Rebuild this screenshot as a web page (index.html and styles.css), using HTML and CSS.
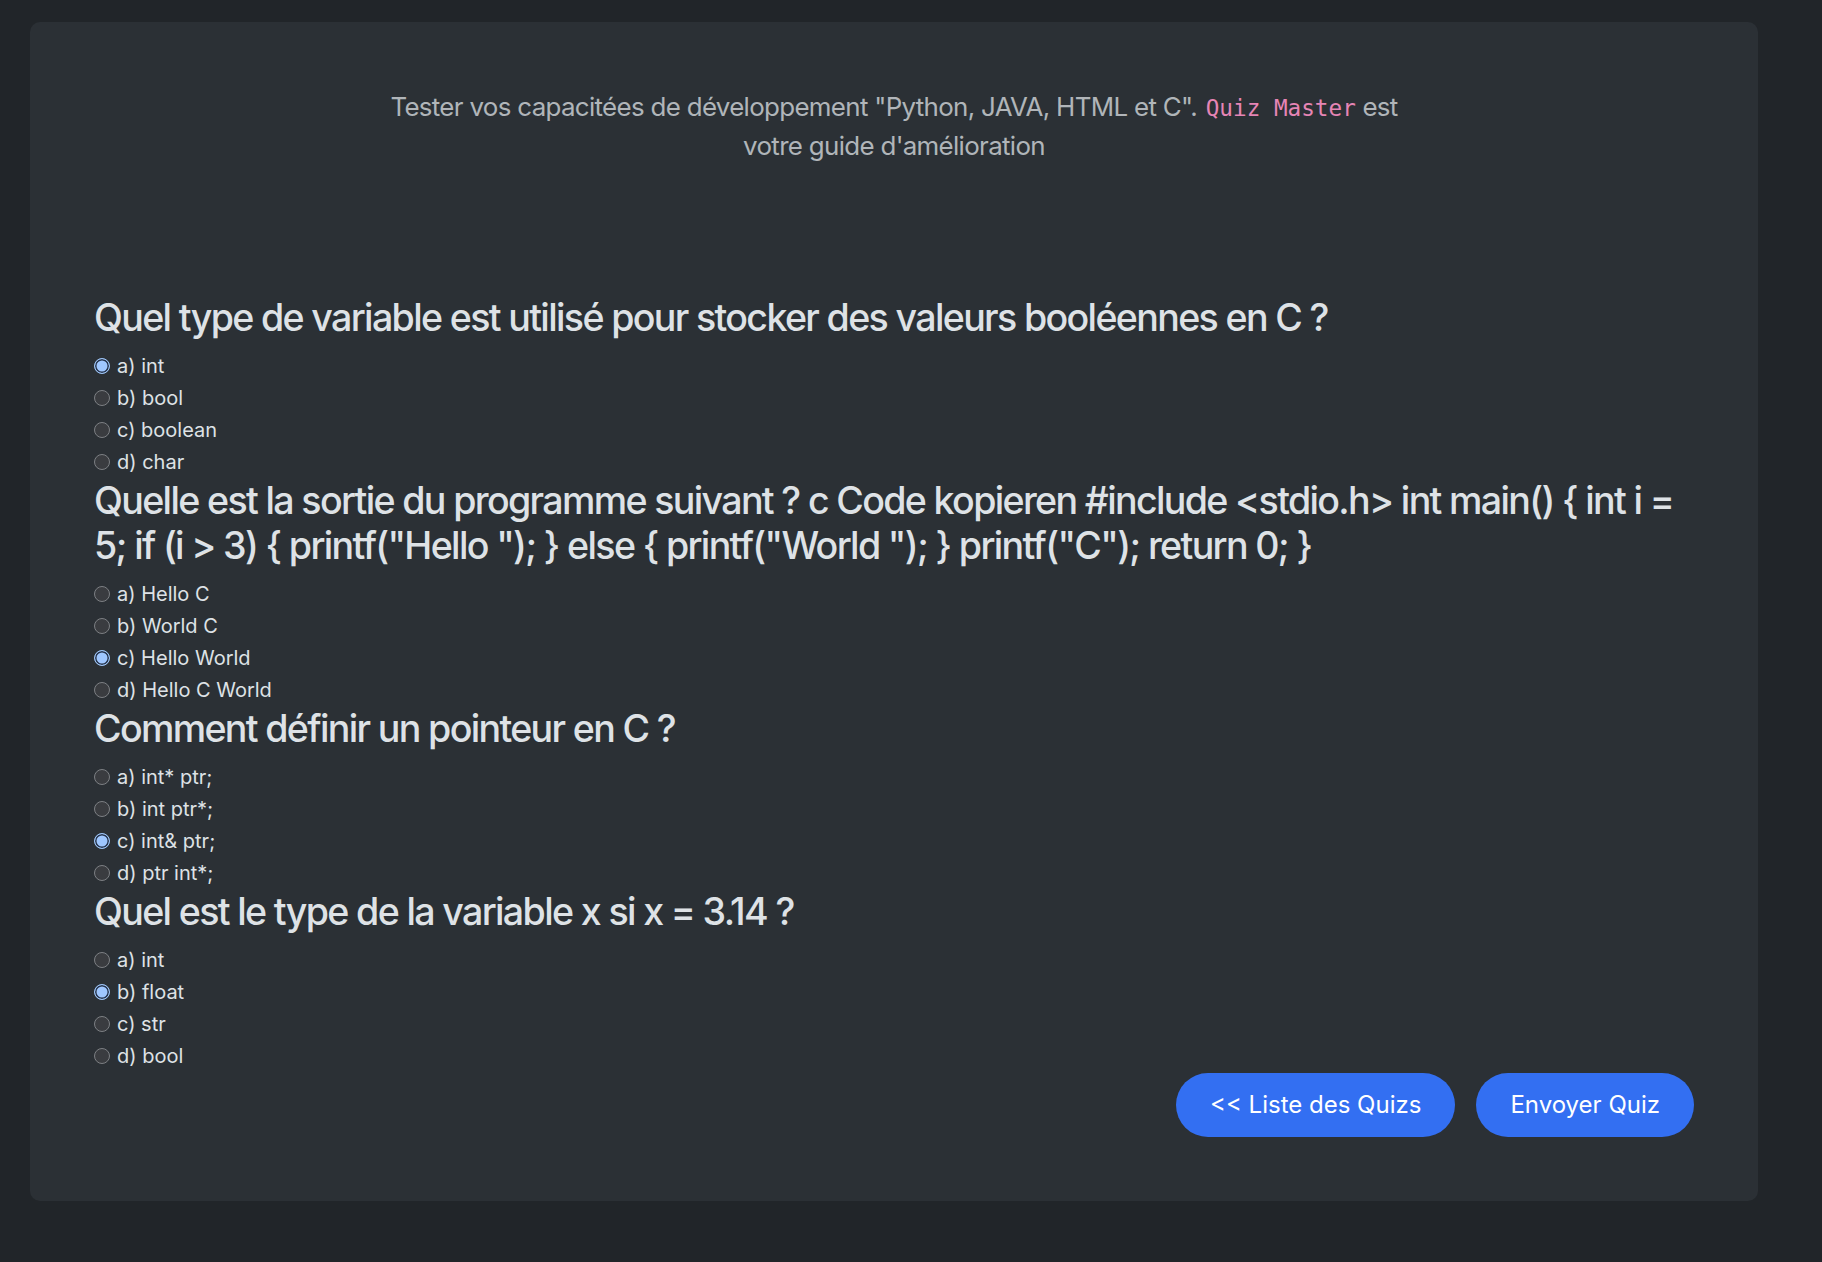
FILE: index.html
```html
<!DOCTYPE html>
<html lang="fr">
<head>
<meta charset="utf-8">
<title>Quiz Master</title>
<link rel="stylesheet" href="styles.css">
</head>
<body>
<div class="page">
  <main class="card">
    <p class="intro"><span>Tester vos capacitées de développement "Python, JAVA, HTML et C".</span> <code>Quiz Master</code> <span>est</span> <span>votre guide d'amélioration</span></p>

    <form class="quiz">
      <section class="question">
        <h2>Quel type de variable est utilisé pour stocker des valeurs booléennes en C ?</h2>
        <label class="option"><input type="radio" name="q1" checked> a) int</label>
        <label class="option"><input type="radio" name="q1"> b) bool</label>
        <label class="option"><input type="radio" name="q1"> c) boolean</label>
        <label class="option"><input type="radio" name="q1"> d) char</label>
      </section>
      <section class="question">
        <h2>Quelle est la sortie du programme suivant ? c Code kopieren #include &lt;stdio.h&gt; int main() { int i = 5; if (i &gt; 3) { printf("Hello "); } else { printf("World "); } printf("C"); return 0; }</h2>
        <label class="option"><input type="radio" name="q2"> a) Hello C</label>
        <label class="option"><input type="radio" name="q2"> b) World C</label>
        <label class="option"><input type="radio" name="q2" checked> c) Hello World</label>
        <label class="option"><input type="radio" name="q2"> d) Hello C World</label>
      </section>
      <section class="question">
        <h2>Comment définir un pointeur en C ?</h2>
        <label class="option"><input type="radio" name="q3"> a) int* ptr;</label>
        <label class="option"><input type="radio" name="q3"> b) int ptr*;</label>
        <label class="option"><input type="radio" name="q3" checked> c) int&amp; ptr;</label>
        <label class="option"><input type="radio" name="q3"> d) ptr int*;</label>
      </section>
      <section class="question">
        <h2>Quel est le type de la variable x si x = 3.14 ?</h2>
        <label class="option"><input type="radio" name="q4"> a) int</label>
        <label class="option"><input type="radio" name="q4" checked> b) float</label>
        <label class="option"><input type="radio" name="q4"> c) str</label>
        <label class="option"><input type="radio" name="q4"> d) bool</label>
      </section>

      <div class="actions">
        <button type="button" class="btn">&lt;&lt; Liste des Quizs</button>
        <button type="submit" class="btn">Envoyer Quiz</button>
      </div>
    </form>
  </main>
</div>
</body>
</html>
```

FILE: styles.css
```css
html, body {
  margin: 0;
  padding: 0;
  background: #212529;
  color-scheme: dark;
}

body {
  font-family: Inter, "Noto Sans", "Liberation Sans", sans-serif;
  color: #dee2e6;
}

.page {
  padding: 22px 64px 62px 30px;
}

.card {
  background: #2b3035;
  border-radius: 10px;
  padding: 66px 64px 64px 64px;
}

.intro {
  max-width: 1030px;
  margin: 0 auto 129px;
  text-align: center;
  font-size: 25.9px;
  line-height: 1.5;
  letter-spacing: -0.026em;
  color: rgba(222, 226, 230, 0.75);
}

.intro code {
  font-family: "DejaVu Sans Mono", "Liberation Mono", monospace;
  font-size: 0.875em;
  letter-spacing: 0;
  margin-left: 2px;
  color: #e685b5;
}

.quiz {
  display: flex;
  flex-direction: column;
}

.question {
  display: flex;
  flex-direction: column;
}

.question h2 {
  margin: 0 0 10px;
  font-size: 37.6px;
  font-weight: 500;
  line-height: 1.2;
  letter-spacing: -0.044em;
  color: #dee2e6;
}

.option {
  display: flex;
  align-items: center;
  height: 32px;
  font-size: 20px;
  color: #dee2e6;
}

.option input {
  appearance: none;
  -webkit-appearance: none;
  box-sizing: border-box;
  flex: none;
  width: 16px;
  height: 16px;
  margin: 0 7px 0 0;
  border-radius: 50%;
  border: 1px solid #7d8084;
  background: #3a3c40;
}

.option input:checked {
  border: 1.5px solid #9ec4f5;
  background: #9fc7ff;
  box-shadow: inset 0 0 0 1.5px #24324a;
}

.actions {
  display: flex;
  justify-content: flex-end;
  gap: 21px;
  margin-top: 1px;
}

.btn {
  font-family: Inter, "Noto Sans", "Liberation Sans", sans-serif;
  font-size: 24px;
  line-height: 36px;
  color: #fff;
  background: #336ff2;
  border: 0;
  border-radius: 999px;
  padding: 14px 34px;
}
```
